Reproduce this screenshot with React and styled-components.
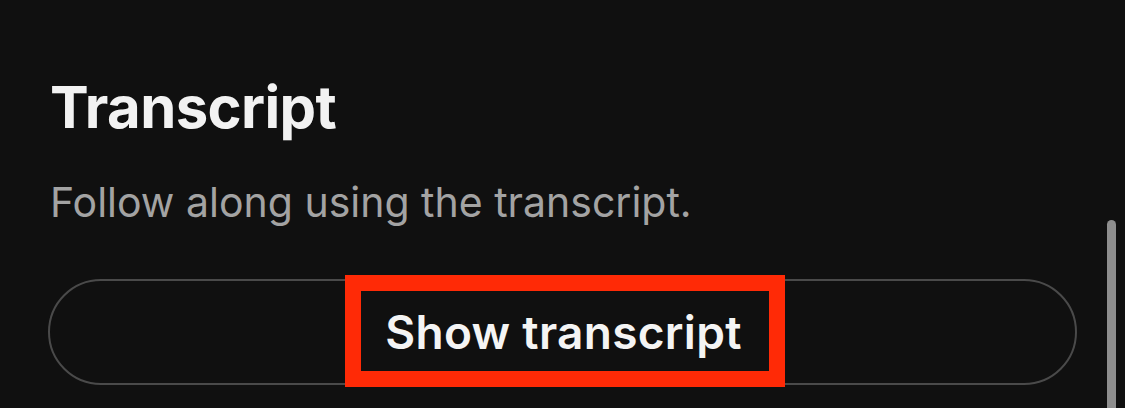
import React from 'react'
import styled, { createGlobalStyle } from 'styled-components'

const Global = createGlobalStyle`
  html, body {
    margin: 0;
    padding: 0;
    background: #101010;
  }
  body {
    font-family: Inter, "Noto Sans", sans-serif;
    -webkit-font-smoothing: antialiased;
  }
`

const Screen = styled.div`
  position: relative;
  width: 1125px;
  height: 408px;
  overflow: hidden;
  background: #101010;
  box-sizing: border-box;
  padding: 72px 48px 0 48px;
  display: flex;
  flex-flow: column nowrap;
`

const Title = styled.h1`
  margin: 0 0 0 2px;
  font-size: 58px;
  line-height: 70px;
  font-weight: 700;
  letter-spacing: -0.6px;
  color: #f2f2f2;
`

const Subtitle = styled.p`
  margin: 37px 0 0 2px;
  font-size: 41px;
  line-height: 46px;
  font-weight: 400;
  color: #a3a3a3;
`

const Button = styled.button`
  position: relative;
  margin-top: 54px;
  width: 1029px;
  height: 106px;
  flex-shrink: 0;
  border: 2px solid #4a4a4a;
  border-radius: 53px;
  background: transparent;
  color: #f4f4f4;
  font-family: inherit;
  font-size: 46px;
  font-weight: 600;
  letter-spacing: 0.3px;
  display: flex;
  justify-content: center;
  align-items: center;
  padding: 0;
  cursor: pointer;
`

const Label = styled.span`
  position: relative;
  z-index: 1;
  margin-left: 2px;
`

const Highlight = styled.span`
  position: absolute;
  left: 295px;
  top: -6px;
  width: 440px;
  height: 112px;
  box-sizing: border-box;
  border: 16px solid #ff2a06;
  background: #101010;
`

const Scrollbar = styled.div`
  position: absolute;
  right: 9px;
  top: 220px;
  bottom: 0;
  width: 9px;
  border-radius: 5px 5px 0 0;
  background: #8e8e8e;
`

export default function App() {
  return (
    <Screen>
      <Global />
      <Title>Transcript</Title>
      <Subtitle>Follow along using the transcript.</Subtitle>
      <Button>
        <Highlight />
        <Label>Show transcript</Label>
      </Button>
      <Scrollbar />
    </Screen>
  )
}
